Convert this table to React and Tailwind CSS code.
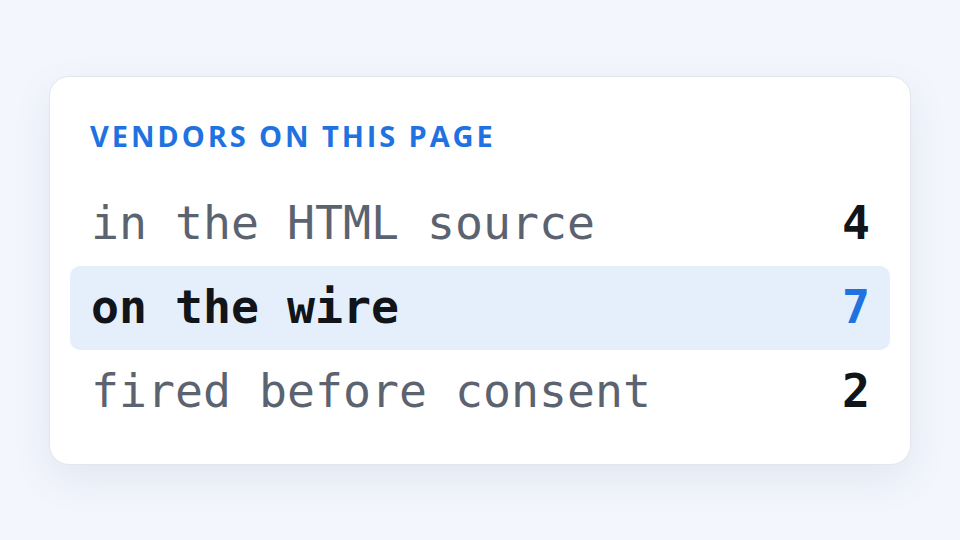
export default function App() {
  const rows = [
    { label: 'in the HTML source', n: 4 },
    { label: 'on the wire', n: 7, active: true },
    { label: 'fired before consent', n: 2 },
  ]
  return (
    <div className="w-[960px] h-[540px] bg-[#f3f6fd] flex items-start justify-center pt-[76px]">
      <div className="w-[862px] h-[389px] bg-white rounded-[20px] border border-[#e3e6ec] shadow-[0_14px_40px_rgba(30,50,90,0.08)] px-[20px] pt-[40px]">
        <div className="pl-[20px] h-[36px] flex items-center font-['Open_Sans',sans-serif] font-bold text-[29px] tracking-[0.1em] text-[#1f72e0] leading-none">
          VENDORS ON THIS PAGE
        </div>
        <div className="mt-[29px] flex flex-col font-['DejaVu_Sans_Mono',monospace] text-[46.5px] leading-none">
          {rows.map(r => (
            <div
              key={r.label}
              className={
                'h-[84px] flex items-center justify-between pl-[21px] pr-[20px] pb-[2px] rounded-[10px] ' +
                (r.active ? 'bg-[#e5effc]' : '')
              }
            >
              <span className={r.active ? 'font-bold text-[#111418]' : 'text-[#5c6370]'}>{r.label}</span>
              <span className={'font-bold ' + (r.active ? 'text-[#1f72e0]' : 'text-[#111418]')}>{r.n}</span>
            </div>
          ))}
        </div>
      </div>
    </div>
  )
}
